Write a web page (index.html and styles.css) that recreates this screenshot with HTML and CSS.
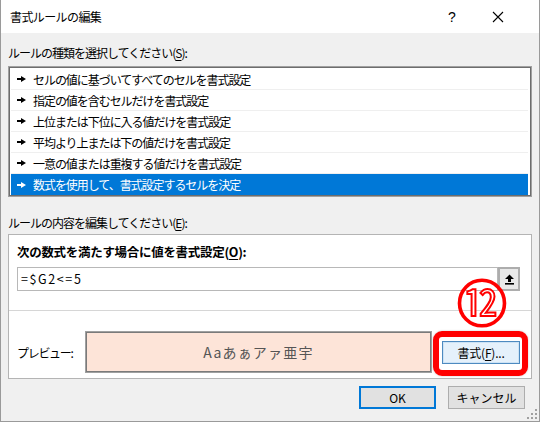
FILE: index.html
```html
<!DOCTYPE html>
<html lang="ja">
<head>
<meta charset="utf-8">
<title>書式ルールの編集</title>
<link rel="stylesheet" href="styles.css">
</head>
<body>
<div class="window">
  <div class="titlebar">
    <span class="title">書式ルールの編集</span>
    <span class="help">?</span>
    <span class="close"><svg width="12" height="12" viewBox="0 0 12 12"><path d="M1 1L11 11M11 1L1 11" stroke="#000" stroke-width="1.1" fill="none"/></svg></span>
  </div>
  <div class="content">
    <div class="label l1">ルールの種類を選択してください(<u>S</u>):</div>
    <div class="listbox">
      <div class="item"><svg class="mark" width="9" height="6" viewBox="0 0 9 6"><path d="M0 2H4V0L9 3L4 6V4H0Z" fill="#000"/></svg><span>セルの値に基づいてすべてのセルを書式設定</span></div>
      <div class="item"><svg class="mark" width="9" height="6" viewBox="0 0 9 6"><path d="M0 2H4V0L9 3L4 6V4H0Z" fill="#000"/></svg><span>指定の値を含むセルだけを書式設定</span></div>
      <div class="item"><svg class="mark" width="9" height="6" viewBox="0 0 9 6"><path d="M0 2H4V0L9 3L4 6V4H0Z" fill="#000"/></svg><span>上位または下位に入る値だけを書式設定</span></div>
      <div class="item"><svg class="mark" width="9" height="6" viewBox="0 0 9 6"><path d="M0 2H4V0L9 3L4 6V4H0Z" fill="#000"/></svg><span>平均より上または下の値だけを書式設定</span></div>
      <div class="item"><svg class="mark" width="9" height="6" viewBox="0 0 9 6"><path d="M0 2H4V0L9 3L4 6V4H0Z" fill="#000"/></svg><span>一意の値または重複する値だけを書式設定</span></div>
      <div class="item sel"><svg class="mark" width="9" height="6" viewBox="0 0 9 6"><path d="M0 2H4V0L9 3L4 6V4H0Z" fill="#fff"/></svg><span>数式を使用して、書式設定するセルを決定</span></div>
    </div>
    <div class="label l2">ルールの内容を編集してください(<u>E</u>):</div>
    <div class="panel">
      <div class="upper">
        <div class="heading">次の数式を満たす場合に値を書式設定(<u>O</u>):</div>
        <div class="formula-row">
          <div class="input">=$G2&lt;=5</div>
          <div class="refbtn"><svg width="11" height="11" viewBox="0 0 11 11"><path d="M5.5 0.5L10 5H7V8H4V5H1Z" fill="#000"/><rect x="1" y="9" width="9" height="1.6" fill="#000"/></svg></div>
        </div>
      </div>
      <div class="lower">
        <span class="plabel">プレビュー:</span>
        <div class="preview">Aaあぁアァ亜宇</div>
        <div class="fmtwrap">
          <div class="btn fmtbtn">書式(<u>F</u>)...</div>
          <div class="redbox"></div>
        </div>
      </div>
      <div class="badge">⑫</div>
    </div>
    <div class="buttons">
      <div class="btn ok">OK</div>
      <div class="btn">キャンセル</div>
    </div>
  </div>
  <div class="grip"><svg width="10" height="10" viewBox="0 0 10 10" fill="#a0a0a0"><rect x="8" y="0" width="2" height="2"/><rect x="4" y="4" width="2" height="2"/><rect x="8" y="4" width="2" height="2"/><rect x="0" y="8" width="2" height="2"/><rect x="4" y="8" width="2" height="2"/><rect x="8" y="8" width="2" height="2"/></svg></div>
</div>
</body>
</html>
```

FILE: styles.css
```css
html, body {
  margin: 0;
  padding: 0;
}
body {
  width: 540px;
  height: 422px;
  overflow: hidden;
  font-family: "Noto Sans CJK JP", "Noto Sans", sans-serif;
  font-size: 12px;
  color: #000;
  background: #f0f0f0;
}
.window {
  position: relative;
  box-sizing: border-box;
  width: 540px;
  height: 422px;
  background: #f0f0f0;
  border-left: 1px solid #9a9a9a;
  border-right: 1px solid #9a9a9a;
  border-bottom: 1px solid #9a9a9a;
}
u {
  text-decoration: underline;
  text-underline-offset: 2px;
}
.titlebar {
  height: 33px;
  background: #fff;
  display: flex;
  align-items: center;
  padding-left: 9px;
}
.title {
  font-size: 12px;
  letter-spacing: -0.6px;
  flex: 1;
}
.help {
  width: 46px;
  text-align: center;
  font-size: 14px;
  font-family: "Liberation Sans", sans-serif;
}
.close {
  width: 46px;
  height: 33px;
  display: flex;
  align-items: center;
  justify-content: center;
  margin-right: 18px;
}
.content {
  padding: 12px 7px 0 7px;
}
.label {
  height: 16px;
  line-height: 16px;
  letter-spacing: -1px;
}
.listbox {
  margin-top: 5px;
  height: 131px;
  box-sizing: border-box;
  background: #fff;
  border: 1px solid #a0a0a0;
  box-shadow: inset 0 0 0 1px #6d6d6d;
  padding: 2px 3px 1px 2px;
}
.item {
  height: 21px;
  box-sizing: border-box;
  border-bottom: 1px solid #efefef;
  display: flex;
  align-items: center;
  padding-left: 6px;
  letter-spacing: -1.05px;
}
.item .mark {
  margin-right: 7px;
  flex: none;
}
.item.sel {
  background: #0078d7;
  color: #fff;
  border-bottom: none;
}
.l2 {
  margin-top: 18px;
}
.panel {
  position: relative;
  margin-top: 3px;
  background: #fff;
  border: 1px solid #b4b4b4;
}
.upper {
  padding: 9px 11px 19px 8px;
  border-bottom: 1px solid #d6d6d6;
}
.heading {
  height: 16px;
  line-height: 16px;
  font-weight: bold;
  font-size: 12.5px;
  letter-spacing: -0.3px;
}
.formula-row {
  margin-top: 7px;
  display: flex;
  height: 24px;
}
.input {
  flex: 1;
  box-sizing: border-box;
  border: 1px solid #b8b8b8;
  height: 24px;
  line-height: 22px;
  padding-left: 3px;
  font-size: 12.5px;
  letter-spacing: 1.6px;
}
.refbtn {
  width: 22px;
  height: 24px;
  box-sizing: border-box;
  border: 2px solid #adadad;
  background: #e9e9e9;
  display: flex;
  align-items: center;
  justify-content: center;
}
.lower {
  display: flex;
  align-items: center;
  padding: 20px 11px 5px 8px;
}
.plabel {
  width: 68px;
  flex: none;
  letter-spacing: -1.3px;
}
.preview {
  width: 347px;
  height: 42px;
  box-sizing: border-box;
  border: 1px solid #a0a0a0;
  box-shadow: inset 0 0 0 1px #7a7a7a;
  background: #fde4d8;
  display: flex;
  align-items: center;
  justify-content: center;
  font-size: 14px;
  letter-spacing: 1.2px;
  color: #555;
}
.fmtwrap {
  position: relative;
  margin-left: 10px;
}
.btn {
  height: 23px;
  box-sizing: border-box;
  border: 1px solid #adadad;
  background: #e1e1e1;
  display: flex;
  align-items: center;
  justify-content: center;
  font-size: 12px;
}
.fmtbtn {
  width: 78px;
  border: 1px solid #4d8ac0;
  box-shadow: inset 0 0 0 1px #cde3f5;
  background: #e5f1fb;
  letter-spacing: -0.2px;
}
.redbox {
  position: absolute;
  left: -9px;
  right: -8px;
  top: -10px;
  bottom: -12px;
  border: 6px solid #ff0000;
  border-radius: 9px;
  box-shadow: 0 0 2px rgba(0,0,0,0.25);
}
.badge {
  position: absolute;
  left: 450px;
  top: 42px;
  width: 46px;
  height: 46px;
  display: flex;
  align-items: center;
  justify-content: center;
  font-size: 50px;
  line-height: 1;
  color: #fff;
  -webkit-text-stroke: 2px #ff0000;
}
.buttons {
  margin-top: 7px;
  display: flex;
  justify-content: flex-end;
  gap: 12px;
  padding-right: 7px;
}
.buttons .btn {
  width: 77px;
}
.btn.ok {
  border: 1px solid #0078d7;
  box-shadow: inset 0 0 0 1px #0078d7;
}
.grip {
  position: absolute;
  right: 2px;
  bottom: 2px;
  width: 10px;
  height: 10px;
  display: flex;
}
```
